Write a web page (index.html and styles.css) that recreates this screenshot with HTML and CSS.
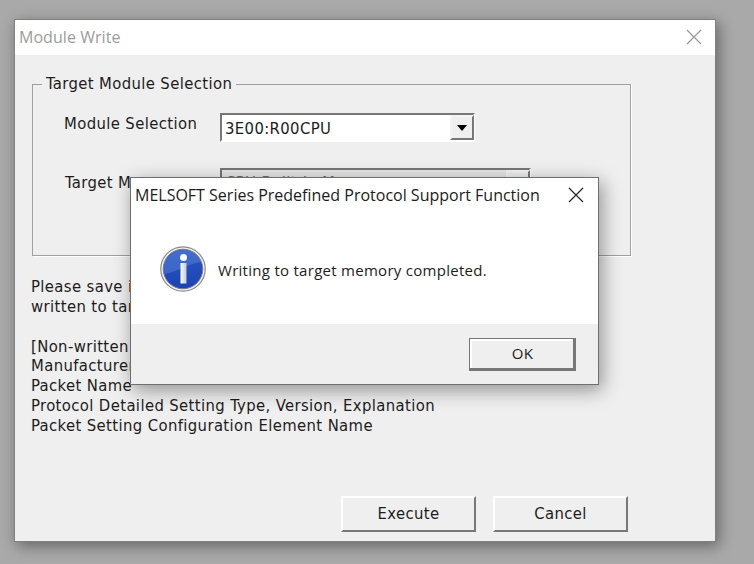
FILE: index.html
```html
<!DOCTYPE html>
<html lang="en">

<head>
    <meta charset="UTF-8">
    <meta name="viewport" content="width=device-width, initial-scale=1.0">
    <title>Module Write</title>
    <link rel="stylesheet" href="styles.css">
</head>

<body>
    <div class="window">
        <div class="titlebar">
            <span class="title">Module Write</span>
            <svg class="close" width="16" height="16" viewBox="0 0 16 16">
                <path d="M1 1L15 15M15 1L1 15" />
            </svg>
        </div>
        <div class="content">
            <fieldset class="group">
                <legend>Target Module Selection</legend>
                <div class="row">
                    <label>Module Selection</label>
                    <div class="combo">
                        <span class="value">3E00:R00CPU</span>
                        <span class="arrow"></span>
                    </div>
                </div>
                <div class="row row2">
                    <label>Target Memory</label>
                    <div class="combo wide disabled">
                        <span class="value">CPU Built-in Memory</span>
                        <span class="arrow"></span>
                    </div>
                </div>
            </fieldset>
            <div class="notes">
                <p>Please save in project file because the following are not<br>written to target memory.</p>
                <p>[Non-written items]<br>Manufacturer<br>Packet Name<br>Protocol Detailed Setting Type, Version, Explanation<br>Packet Setting Configuration Element Name</p>
            </div>
            <div class="buttons">
                <button class="btn">Execute</button>
                <button class="btn">Cancel</button>
            </div>
        </div>
    </div>

    <div class="msgbox">
        <div class="titlebar">
            <span class="title">MELSOFT Series Predefined Protocol Support Function</span>
            <svg class="close" width="16" height="16" viewBox="0 0 16 16">
                <path d="M1 1L15 15M15 1L1 15" />
            </svg>
        </div>
        <div class="message">
            <svg class="info" width="46" height="46" viewBox="0 0 46 46">
                <defs>
                    <linearGradient id="blue" x1="0" y1="0" x2="0" y2="1">
                        <stop offset="0" stop-color="#2d59bd" />
                        <stop offset="1" stop-color="#1a42b8" />
                    </linearGradient>
                    <linearGradient id="stem" x1="0" y1="0" x2="1" y2="0">
                        <stop offset="0" stop-color="#ffffff" />
                        <stop offset="1" stop-color="#c4c8d0" />
                    </linearGradient>
                </defs>
                <circle cx="23" cy="23" r="22.2" fill="#f4f4f4" stroke="#8a8a8a" stroke-width="1.2" />
                <circle cx="23" cy="23" r="19.8" fill="url(#blue)" stroke="#777c86" stroke-width="1" />
                <path d="M4 28C2 13 12 4 23 4C33 4 40 10 41.500 16C32 16 18 26 4 28Z" fill="#6f98e4" opacity=".35" />
                <circle cx="23.500" cy="11.500" r="3.500" fill="#fff" />
                <rect x="20.500" y="17" width="6" height="20.500" fill="url(#stem)" />
            </svg>
            <span class="text">Writing to target memory completed.</span>
        </div>
        <div class="footer">
            <button class="btn ok">OK</button>
        </div>
    </div>
</body>

</html>
```
FILE: styles.css
```css
* {
    box-sizing: border-box;
}

body {
    margin: 0;
    padding: 19px 0 0 14px;
    height: 564px;
    overflow: hidden;
    background: #a9a9a9;
    font-family: "DejaVu Sans Condensed", "DejaVu Sans", sans-serif;
    font-stretch: condensed;
    font-size: 16.5px;
    letter-spacing: .38px;
    color: #1c1c1c;
}

.window {
    width: 702px;
    height: 523px;
    border: 1px solid #808080;
    background: #efefef;
    box-shadow: 3px 4px 14px rgba(0, 0, 0, .4);
}

.titlebar {
    display: flex;
    align-items: center;
    justify-content: space-between;
    height: 35px;
    padding: 0 13px 0 4px;
    background: #fff;
    font-family: "Open Sans", "Noto Sans", sans-serif;
    font-stretch: normal;
    font-size: 16px;
    letter-spacing: .05px;
    color: #9c9c9c;
}

.title {
    padding-bottom: 2px;
    white-space: nowrap;
}

.close {
    margin-top: -2px;
}

.close path {
    fill: none;
    stroke: #999;
    stroke-width: 1.2;
}

.content {
    padding: 20px 0 0 16px;
}

.group {
    width: 599px;
    height: 181px;
    margin: 0 0 0 1px;
    padding: 20px 0 0 31px;
    border: 1px solid #a0a0a0;
    box-shadow: 1px 1px #fff;
}

legend {
    height: 18px;
    margin-left: -22px;
    padding: 0 4px;
    line-height: 18px;
}

.row {
    display: flex;
    align-items: flex-start;
}

.row label {
    width: 156px;
    padding-top: 2px;
    line-height: 18px;
    white-space: nowrap;
}

.row2 {
    margin-top: 26px;
}

.row2 label {
    padding: 6px 0 0 1px;
}

.combo {
    display: flex;
    width: 255px;
    height: 29px;
    border: 2px solid;
    border-color: #777 #fff #fff #777;
    background: #fff;
}

.combo.wide {
    width: 311px;
}

.combo.disabled {
    background: #e6e6e6;
    color: #6d6d6d;
}

.combo .value {
    flex: 1;
    padding-left: 3px;
    line-height: 28px;
}

.combo.disabled .value {
    line-height: 26px;
}

.combo .arrow {
    display: flex;
    align-items: center;
    justify-content: center;
    width: 24px;
    margin-right: -1px;
    border: 2px solid;
    border-color: #f4f4f4 #777 #777 #f4f4f4;
    background: #efefef;
}

.combo .arrow::after {
    content: "";
    border: 5px solid transparent;
    border-top: 6px solid #000;
    border-bottom: none;
}

.combo.disabled .arrow::after {
    border-top-color: #999;
}

.notes {
    padding-top: 21px;
    line-height: 19.8px;
}

.notes p {
    margin: 0 0 20px;
    white-space: nowrap;
}

.buttons {
    display: flex;
    gap: 17px;
    padding: 40px 0 0 310px;
}

.btn {
    width: 135px;
    height: 36px;
    padding: 0;
    border: 2px solid;
    border-color: #fff #777 #777 #fff;
    background: #efefef;
    font: inherit;
    letter-spacing: inherit;
    color: inherit;
}

.msgbox {
    position: absolute;
    left: 130px;
    top: 177px;
    width: 469px;
    height: 208px;
    border: 1px solid #6e6e6e;
    background: #fff;
    box-shadow: 3px 5px 18px rgba(0, 0, 0, .4);
    font-family: "Open Sans", "Noto Sans", sans-serif;
    font-stretch: normal;
    font-size: 15px;
    letter-spacing: .28px;
}

.msgbox .titlebar {
    height: 34px;
    padding-right: 14px;
    letter-spacing: 0;
    color: #1c1c1c;
}

.msgbox .title {
    padding: 0;
}

.msgbox .close {
    margin-top: 0;
}

.msgbox .close path {
    stroke: #222;
}

.message {
    display: flex;
    align-items: center;
    gap: 12px;
    height: 112px;
    padding: 2px 0 0 29px;
}

.message .text {
    padding-top: 2px;
}

.footer {
    display: flex;
    justify-content: flex-end;
    height: 60px;
    padding: 14px 22px 0 0;
    background: #efefef;
}

.ok {
    width: 107px;
    height: 33px;
    padding-bottom: 3px;
    border: 1px solid #777;
    box-shadow: inset -2px -2px #777, inset 2px 2px #fff;
}
```
